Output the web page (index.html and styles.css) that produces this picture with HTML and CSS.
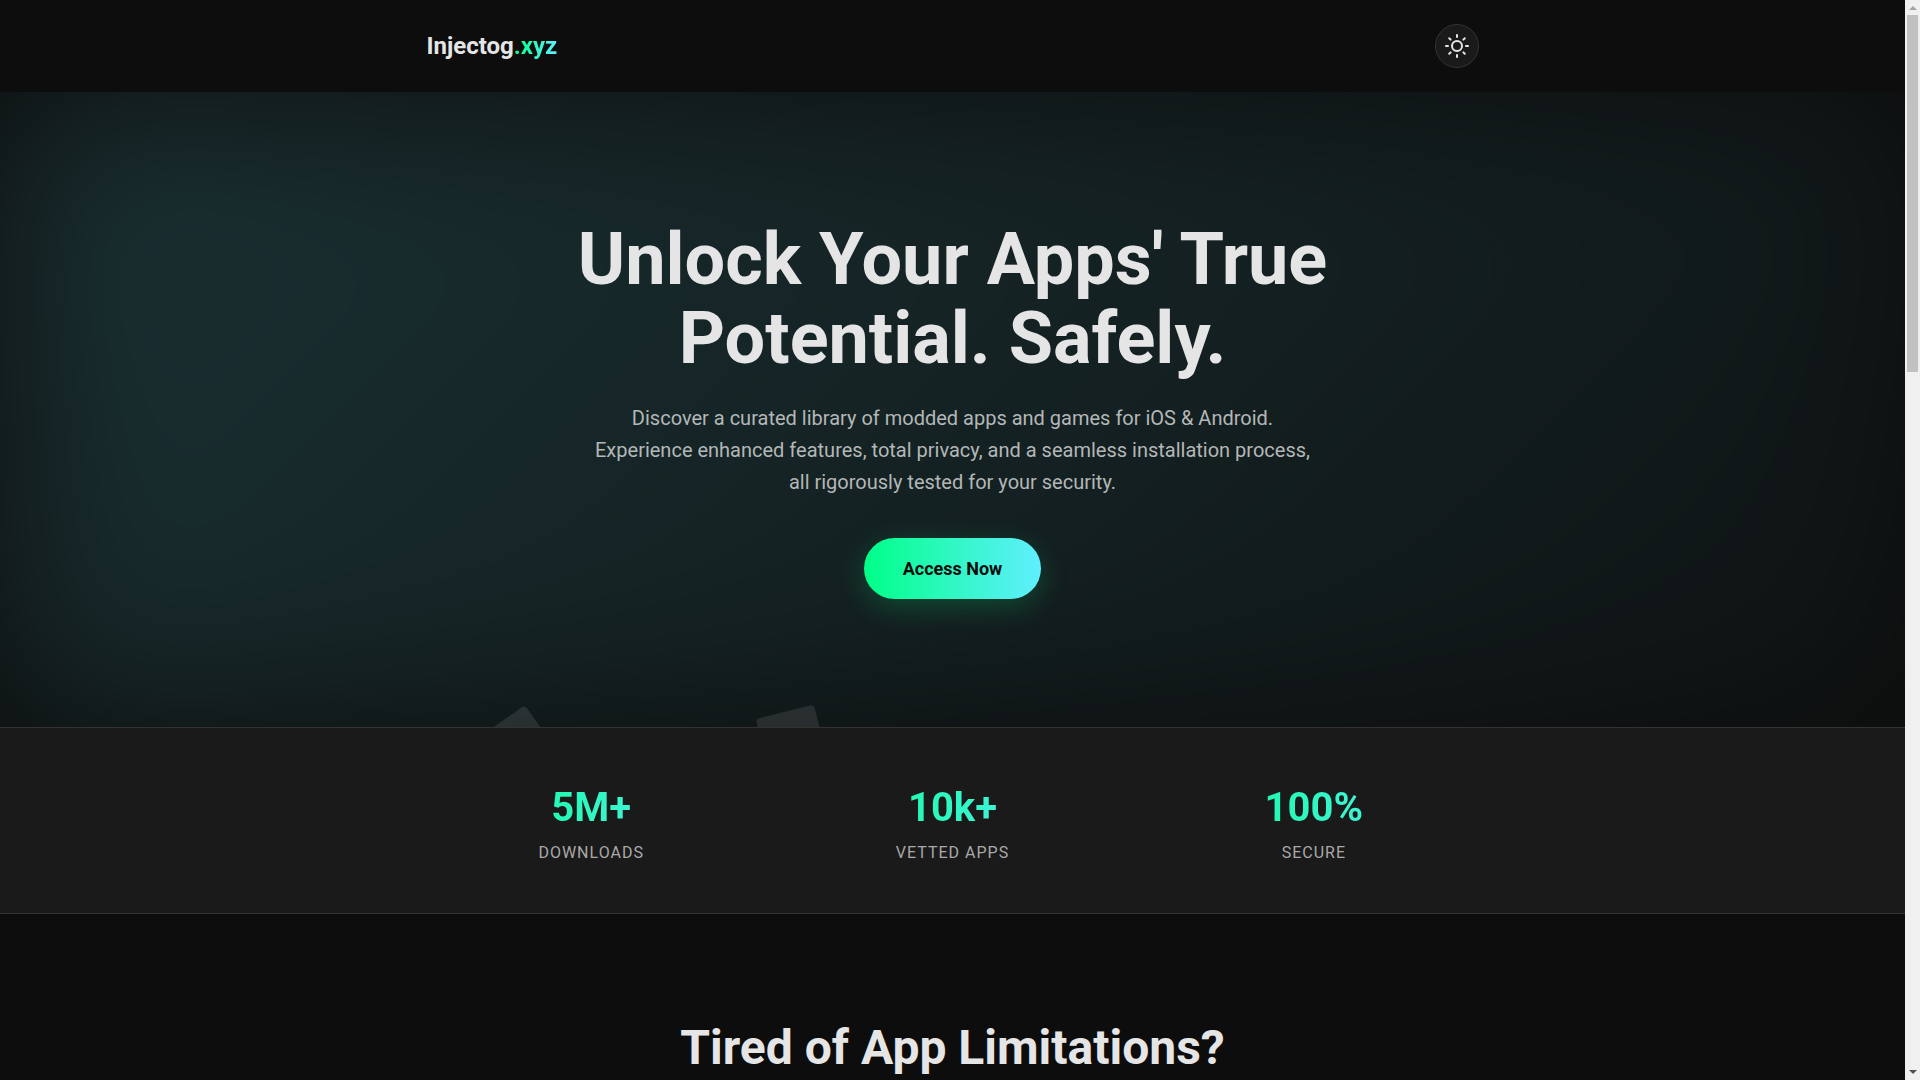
FILE: index.html
```html
<!DOCTYPE html>
<html lang="en">
<head>
    <meta charset="UTF-8">
    <meta name="viewport" content="width=device-width, initial-scale=1.0">
    <title>Injectog.xyz</title>
    <link rel="stylesheet" href="styles.css">
</head>
<body>
    <header class="header">
        <div class="container header-inner">
            <a href="#" class="logo">Injectog<span class="gradient-text">.xyz</span></a>
            <button type="button" class="theme-toggle" aria-label="Toggle theme">
                <svg width="24" height="24" viewBox="0 0 24 24" fill="none" stroke="currentColor" stroke-width="2" stroke-linecap="round" stroke-linejoin="round">
                    <circle cx="12" cy="12" r="5"></circle>
                    <line x1="12" y1="1" x2="12" y2="3"></line>
                    <line x1="12" y1="21" x2="12" y2="23"></line>
                    <line x1="4.22" y1="4.22" x2="5.64" y2="5.64"></line>
                    <line x1="18.36" y1="18.36" x2="19.78" y2="19.78"></line>
                    <line x1="1" y1="12" x2="3" y2="12"></line>
                    <line x1="21" y1="12" x2="23" y2="12"></line>
                    <line x1="4.22" y1="19.78" x2="5.64" y2="18.36"></line>
                    <line x1="18.36" y1="5.64" x2="19.78" y2="4.22"></line>
                </svg>
            </button>
        </div>
    </header>

    <main>
        <section class="hero">
            <!-- Floating squares -->
            <div class="shape shape-small"></div>
            <div class="shape shape-large"></div>

            <div class="container hero-content">
                <h1>Unlock Your Apps' True Potential. Safely.</h1>
                <p>Discover a curated library of modded apps and games for iOS &amp; Android. Experience enhanced features, total privacy, and a seamless installation process, all rigorously tested for your security.</p>
                <a href="#" class="cta-button">Access Now</a>
            </div>
        </section>

        <section class="stats">
            <div class="container stats-grid">
                <div class="stat">
                    <div class="stat-number gradient-text">5M+</div>
                    <div class="stat-label">Downloads</div>
                </div>
                <div class="stat">
                    <div class="stat-number gradient-text">10k+</div>
                    <div class="stat-label">Vetted Apps</div>
                </div>
                <div class="stat">
                    <div class="stat-number gradient-text">100%</div>
                    <div class="stat-label">Secure</div>
                </div>
            </div>
        </section>

        <section class="limits">
            <div class="container">
                <h2>Tired of App Limitations?</h2>
            </div>
        </section>
    </main>

    <div class="scrollbar" aria-hidden="true">
        <span class="arrow arrow-up"></span>
        <div class="track"><div class="thumb"></div></div>
        <span class="arrow arrow-down"></span>
    </div>
</body>
</html>
```
FILE: styles.css
```css
:root {
    --bg: #0d0d0d;
    --surface: #1a1a1a;
    --border: #333;
    --text: #e5e5e5;
    --text-muted: #a9a9a9;
    --gradient: linear-gradient(90deg, #00ff87, #60efff);
}

* {
    box-sizing: border-box;
    margin: 0;
    padding: 0;
}

html {
    background: var(--bg);
}

body {
    font-family: Roboto, sans-serif;
    font-size: 16px;
    line-height: 1.6;
    background: var(--bg);
    color: var(--text);
    height: 100vh;
    padding-right: 15px;
    overflow: hidden;
}

.container {
    max-width: 1100px;
    margin: 0 auto;
    padding: 0 24px;
}

.gradient-text {
    background: var(--gradient);
    -webkit-background-clip: text;
    background-clip: text;
    color: transparent;
}

/* Header */
.header {
    position: relative;
    z-index: 2;
    background: var(--bg);
    padding: 24px 0;
}

.header-inner {
    display: flex;
    justify-content: space-between;
    align-items: center;
}

.logo {
    font-size: 24px;
    font-weight: 700;
    color: var(--text);
    text-decoration: none;
}

.theme-toggle {
    display: flex;
    align-items: center;
    justify-content: center;
    width: 44px;
    height: 44px;
    background: var(--surface);
    border: 1px solid var(--border);
    border-radius: 50%;
    color: var(--text);
    cursor: pointer;
}

/* Hero */
.hero {
    position: relative;
    overflow: hidden;
    padding: 128px 0;
    text-align: center;
}

.hero::before {
    content: "";
    position: absolute;
    inset: 0;
    background: linear-gradient(135deg, #60efff, rgba(96, 239, 255, 0.15));
    opacity: 0.16;
    filter: blur(90px);
}

.shape {
    position: absolute;
    background: rgba(255, 255, 255, 0.1);
    border-radius: 4px;
}

.shape-small {
    left: 26.25%;
    bottom: -26px;
    width: 40px;
    height: 40px;
    transform: rotate(-35deg);
}

.shape-large {
    left: 40%;
    bottom: -44px;
    width: 60px;
    height: 60px;
    transform: rotate(-14deg);
}

.hero-content {
    position: relative;
    display: flex;
    flex-direction: column;
    align-items: center;
}

.hero h1 {
    max-width: 800px;
    font-size: 72px;
    font-weight: 700;
    line-height: 79px;
    margin-bottom: 24px;
}

.hero p {
    max-width: 720px;
    font-size: 20px;
    line-height: 32px;
    color: #b3b7b7;
    margin-bottom: 40px;
}

.cta-button {
    padding: 16px 39px;
    font-size: 18px;
    font-weight: 700;
    line-height: 29px;
    color: var(--bg);
    background: var(--gradient);
    border-radius: 50px;
    text-decoration: none;
    box-shadow: 0 8px 30px rgba(0, 255, 135, 0.2);
}

/* Stats */
.stats {
    position: relative;
    background: var(--surface);
    border-top: 1px solid var(--border);
    border-bottom: 1px solid var(--border);
    padding: 48px 0;
    text-align: center;
}

.stats-grid {
    display: grid;
    grid-template-columns: repeat(3, 1fr);
    gap: 32px;
}

.stat-number {
    font-size: 40px;
    font-weight: 700;
    line-height: 64px;
}

.stat-label {
    color: var(--text-muted);
    line-height: 25px;
    text-transform: uppercase;
    letter-spacing: 1px;
}

/* Limitations */
.limits {
    padding: 96px 0;
    text-align: center;
}

.limits h2 {
    font-size: 48px;
    font-weight: 700;
    line-height: 76px;
}

/* Scrollbar */
.scrollbar {
    position: fixed;
    top: 0;
    right: 0;
    bottom: 0;
    z-index: 3;
    width: 15px;
    display: flex;
    flex-direction: column;
    align-items: center;
    justify-content: space-between;
    padding: 6px 0;
    background: #f0f0f0;
}

.track {
    flex: 1;
    width: 11px;
    margin: 5px 0;
}

.thumb {
    height: 34%;
    background: #c1c1c1;
}

.arrow {
    border: 4px solid transparent;
}

.arrow-up {
    border-top: 0;
    border-bottom-color: #a3a3a3;
}

.arrow-down {
    border-bottom: 0;
    border-top-color: #505050;
}
```
